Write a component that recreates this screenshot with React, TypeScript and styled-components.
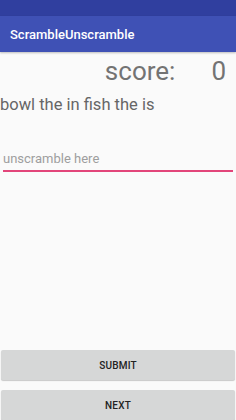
import React from "react";
import styled, { createGlobalStyle } from "styled-components";

const Global = createGlobalStyle`
  html, body { margin: 0; padding: 0; background: #fafafa; }
  body { font-family: Roboto, "Noto Sans", sans-serif; }
`;

const Screen = styled.div`
  width: 236px;
  height: 420px;
  display: flex;
  flex-direction: column;
  background: #fafafa;
  overflow: hidden;
`;

const StatusBar = styled.div`
  height: 16px;
  background: #303f9f;
`;

const AppBar = styled.div`
  height: 36px;
  background: #3f51b5;
  display: flex;
  align-items: center;
  padding-left: 10px;
  color: #fff;
  font-size: 13px;
  font-weight: 500;
  box-shadow: 0 1px 2px rgba(0,0,0,0.25);
  position: relative;
  z-index: 1;
`;

const Content = styled.div`
  flex: 1;
  display: flex;
  flex-direction: column;
`;

const ScoreRow = styled.div`
  display: flex;
  justify-content: flex-end;
  gap: 36px;
  padding: 4px 10px 0 0;
  font-size: 26px;
  color: #737373;
  line-height: 30px;
`;

const Scrambled = styled.div`
  font-size: 16.5px;
  color: #666;
  line-height: 20px;
  margin-top: 9px;
`;

const Field = styled.input`
  margin: 36px 3px 0 3px;
  border: none;
  border-bottom: 2px solid #e2457a;
  background: transparent;
  font-family: Roboto, sans-serif;
  font-size: 13px;
  padding: 0 0 4px 0;
  outline: none;
  color: #333;
  &::placeholder { color: #9e9e9e; }
`;

const Spacer = styled.div`
  flex: 1;
`;

const Button = styled.button`
  margin: 0 1px 10px 1px;
  height: 30px;
  border: none;
  border-radius: 2px;
  background: #d6d7d7;
  box-shadow: 0 1px 1px rgba(0,0,0,0.2);
  font-family: Roboto, sans-serif;
  font-weight: 500;
  font-size: 10px;
  color: #222;
  letter-spacing: 0.2px;
  &:last-child { margin-bottom: 0; }
`;

export default function App() {
  return (
    <Screen>
      <Global />
      <StatusBar />
      <AppBar>ScrambleUnscramble</AppBar>
      <Content>
        <ScoreRow>
          <span>score:</span>
          <span>0</span>
        </ScoreRow>
        <Scrambled>bowl the in fish the is</Scrambled>
        <Field placeholder="unscramble here" />
        <Spacer />
        <Button>SUBMIT</Button>
        <Button>NEXT</Button>
      </Content>
    </Screen>
  );
}
